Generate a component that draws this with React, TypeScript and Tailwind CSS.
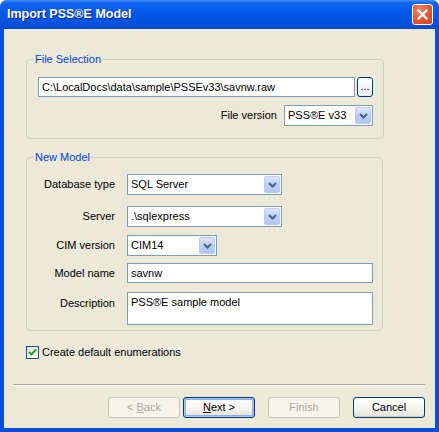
import React from "react";

const font = { fontFamily: '"Liberation Sans", Arial, sans-serif' };

function Chevron() {
  return (
    <svg width="9" height="6" viewBox="0 0 9 6">
      <path d="M1 1 L4.5 4.5 L8 1" fill="none" stroke="#4D6185" strokeWidth="2" />
    </svg>
  );
}

function Combo({ value, w }: { value: string; w: string }) {
  return (
    <div className={`${w} h-[21px] border border-[#7F9DB9] bg-white flex items-stretch`}>
      <div className="flex-1 flex items-center pl-[3px] text-black leading-none">{value}</div>
      <div className="w-[16px] m-[1px] rounded-[2px] border border-[#B9CBF3] bg-[linear-gradient(to_bottom,#DCE6FC,#C1D3FB_40%,#B2C6F6)] flex items-center justify-center">
        <Chevron />
      </div>
    </div>
  );
}

function Btn({
  children,
  disabled,
  def,
}: {
  children: React.ReactNode;
  disabled?: boolean;
  def?: boolean;
}) {
  const base = "w-[72px] h-[21px] rounded-[3px] flex items-center justify-center leading-none";
  if (disabled) {
    return (
      <div className={`${base} border border-[#C9C7BA] bg-[#F5F4EA] text-[#ACA899]`}>
        <span className="whitespace-pre">{children}</span>
      </div>
    );
  }
  return (
    <div
      className={`${base} border border-[#003C74] text-black bg-[linear-gradient(to_bottom,#FFFFFF,#F4F3EE_60%,#E3E1D6)] ${
        def ? "shadow-[inset_0_0_0_1px_#A9C6F5,inset_0_0_0_2px_#8AAEEF]" : "shadow-[inset_0_-1px_0_#D6D0C5]"
      }`}
    >
      <span className="whitespace-pre">{children}</span>
    </div>
  );
}

export default function App() {
  return (
    <div
      className="w-[439px] h-[432px] rounded-t-[7px] overflow-hidden bg-[#0A4FD8] flex flex-col text-[11px]"
      style={font}
    >
      {/* Title bar */}
      <div className="h-[29px] shrink-0 bg-[linear-gradient(to_bottom,#3C8DF8_0%,#0F63EE_12%,#0458E8_45%,#0253E0_80%,#0A48CF_100%)] flex items-center justify-between pl-[7px] pr-[6px]">
        <span className="text-white font-bold text-[12.5px] leading-none [text-shadow:1px_1px_0_#0A2A8A]">
          Import PSS®E Model
        </span>
        <div className="w-[21px] h-[21px] rounded-[3px] border border-white bg-[radial-gradient(circle_at_35%_30%,#F08A68,#E0572F_55%,#C8401C)] flex items-center justify-center">
          <svg width="11" height="11" viewBox="0 0 11 11">
            <path d="M1.5 1.5 L9.5 9.5 M9.5 1.5 L1.5 9.5" stroke="white" strokeWidth="2.2" strokeLinecap="square" />
          </svg>
        </div>
      </div>

      {/* Body */}
      <div className="flex-1 mx-[4px] mb-[4px] bg-[#ECE9D8] flex flex-col">
        {/* File Selection */}
        <fieldset className="ml-[22px] w-[357px] mt-[23px] border border-[#D0D0BF] rounded-[4px] pb-[12px]">
          <legend className="ml-[7px] px-[1px] leading-[14px] text-[#0046D5]">File Selection</legend>
          <div className="pl-[11px] pr-[10px]">
            <div className="mt-[11px] flex items-center gap-[2px]">
              <div className="w-[317px] h-[20px] border border-[#7F9DB9] bg-white flex items-center pl-[3px] text-black">
                C:\LocalDocs\data\sample\PSSEv33\savnw.raw
              </div>
              <div className="w-[16px] h-[20px] rounded-[3px] border border-[#003C74] bg-[linear-gradient(to_bottom,#FFFFFF,#ECEBE6)] flex items-end justify-center pb-[4px] text-black leading-none">
                ...
              </div>
            </div>
            <div className="mt-[8px] flex items-center justify-end gap-[7px]">
              <span className="text-black">File version</span>
              <Combo value="PSS®E v33" w="w-[89px]" />
            </div>
          </div>
        </fieldset>

        {/* New Model */}
        <fieldset className="ml-[22px] w-[357px] mt-[11px] border border-[#D0D0BF] rounded-[4px] pb-[5px]">
          <legend className="ml-[7px] px-[1px] leading-[14px] text-[#0046D5]">New Model</legend>
          <div className="mt-[10px] flex items-center">
            <span className="w-[88px] text-right mr-[12px] text-black">Database type</span>
            <Combo value="SQL Server" w="w-[155px]" />
          </div>
          <div className="mt-[11px] flex items-center">
            <span className="w-[88px] text-right mr-[12px] text-black">Server</span>
            <Combo value=".\sqlexpress" w="w-[155px]" />
          </div>
          <div className="mt-[8px] flex items-center">
            <span className="w-[88px] text-right mr-[12px] text-black">CIM version</span>
            <Combo value="CIM14" w="w-[90px]" />
          </div>
          <div className="mt-[7px] flex items-center">
            <span className="w-[88px] text-right mr-[12px] text-black">Model name</span>
            <div className="w-[246px] h-[20px] border border-[#7F9DB9] bg-white flex items-center pl-[3px] text-black">
              savnw
            </div>
          </div>
          <div className="mt-[9px] flex items-start">
            <span className="w-[88px] text-right mr-[12px] mt-[3px] text-black">Description</span>
            <div className="w-[246px] h-[33px] border border-[#7F9DB9] bg-white pl-[3px] pt-[1px] text-black">
              PSS®E sample model
            </div>
          </div>
        </fieldset>

        {/* Checkbox */}
        <div className="ml-[22px] mt-[13px] flex items-center gap-[3px]">
          <div className="w-[13px] h-[13px] border border-[#1C5180] bg-[linear-gradient(135deg,#DCDCD7,#FFFFFF)] flex items-center justify-center">
            <svg width="9" height="9" viewBox="0 0 9 9">
              <path d="M1 4 L3.5 6.5 L8 1.5" fill="none" stroke="#21A121" strokeWidth="2" />
            </svg>
          </div>
          <span className="text-black">Create default enumerations</span>
        </div>

        {/* Separator */}
        <div className="ml-[9px] mr-[10px] mt-[23px] border-t border-[#ACA899] border-b border-b-white" />

        {/* Buttons */}
        <div className="mt-[11px] mr-[10px] flex justify-end">
          <Btn disabled>
            {"< "}
            <span className="underline">B</span>ack
          </Btn>
          <div className="w-[3px]" />
          <Btn def>
            <span className="underline">N</span>
            {"ext >"}
          </Btn>
          <div className="w-[13px]" />
          <Btn disabled>Finish</Btn>
          <div className="w-[13px]" />
          <Btn>Cancel</Btn>
        </div>
      </div>
    </div>
  );
}
